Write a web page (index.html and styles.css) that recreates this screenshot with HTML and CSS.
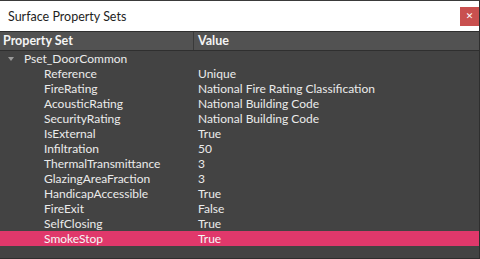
FILE: index.html
```html
<!DOCTYPE html>
<html lang="en">
<head>
  <meta charset="UTF-8" />
  <title>Surface Property Sets</title>
  <link rel="stylesheet" href="styles.css">
</head>
<body>
  <div class="window">
    <div class="titlebar">
      <span class="title">Surface Property Sets</span>
      <button class="close">&#x2715;</button>
    </div>

    <div class="tree">
      <div class="head">
        <div class="col name">Property Set</div>
        <div class="col value">Value</div>
      </div>

      <div class="row group">
        <div class="col name"><span class="caret"></span>Pset_DoorCommon</div>
        <div class="col value"></div>
      </div>
      <div class="row"><div class="col name child">Reference</div><div class="col value">Unique</div></div>
      <div class="row"><div class="col name child">FireRating</div><div class="col value">National Fire Rating Classification</div></div>
      <div class="row"><div class="col name child">AcousticRating</div><div class="col value">National Building Code</div></div>
      <div class="row"><div class="col name child">SecurityRating</div><div class="col value">National Building Code</div></div>
      <div class="row"><div class="col name child">IsExternal</div><div class="col value">True</div></div>
      <div class="row"><div class="col name child">Infiltration</div><div class="col value">50</div></div>
      <div class="row"><div class="col name child">ThermalTransmittance</div><div class="col value">3</div></div>
      <div class="row"><div class="col name child">GlazingAreaFraction</div><div class="col value">3</div></div>
      <div class="row"><div class="col name child">HandicapAccessible</div><div class="col value">True</div></div>
      <div class="row"><div class="col name child">FireExit</div><div class="col value">False</div></div>
      <div class="row"><div class="col name child">SelfClosing</div><div class="col value">True</div></div>
      <div class="row selected"><div class="col name child">SmokeStop</div><div class="col value">True</div></div>
    </div>
  </div>
</body>
</html>
```

FILE: styles.css
```css
* {
  box-sizing: border-box;
  margin: 0;
  padding: 0;
}

html, body {
  width: 480px;
  height: 259px;
  overflow: hidden;
}

body {
  font-family: 'Lato', sans-serif;
  font-size: 12px;
  background: #434343;
}

.window {
  display: flex;
  flex-direction: column;
  height: 259px;
  border-top: 1px solid #3a3a3a;
  border-right: 1px solid #2e2e2e;
  border-bottom: 1px solid #2e2e2e;
}

.titlebar {
  height: 30px;
  background: #fff;
  display: flex;
  align-items: center;
  justify-content: space-between;
  padding-left: 8px;
  color: #1e1e1e;
}

.title {
  font-size: 12.5px;
}

.close {
  width: 19px;
  height: 19px;
  margin-top: 1px;
  border: none;
  background: #c9504f;
  color: #fff;
  font-size: 9px;
  font-weight: bold;
  line-height: 19px;
  text-align: center;
  font-family: 'DejaVu Sans', sans-serif;
}

.tree {
  flex: 1;
  background: #434343;
  color: #ebebeb;
}

.head {
  display: flex;
  height: 20px;
  background: #525252;
  border-top: 1px solid #2f2f2f;
  border-bottom: 1px solid #2f2f2f;
  font-weight: bold;
  font-size: 12.5px;
  color: #f4f4f4;
}

.head .col {
  line-height: 18px;
}

.head .name {
  border-right: 1px solid #3a3a3a;
}

.row {
  display: flex;
  height: 15px;
  line-height: 15px;
}

.col.name {
  width: 194px;
  padding-left: 3px;
  white-space: nowrap;
}

.col.value {
  flex: 1;
  padding-left: 4px;
  white-space: nowrap;
}

.group .name {
  padding-left: 8px;
  display: flex;
  align-items: center;
}

.caret {
  width: 0;
  height: 0;
  border-left: 3px solid transparent;
  border-right: 3px solid transparent;
  border-top: 4px solid #9a9a9a;
  margin-right: 10px;
}

.col.child {
  padding-left: 44px;
}

.row.selected {
  background: #e0386b;
  color: #f6f6f6;
}
```
